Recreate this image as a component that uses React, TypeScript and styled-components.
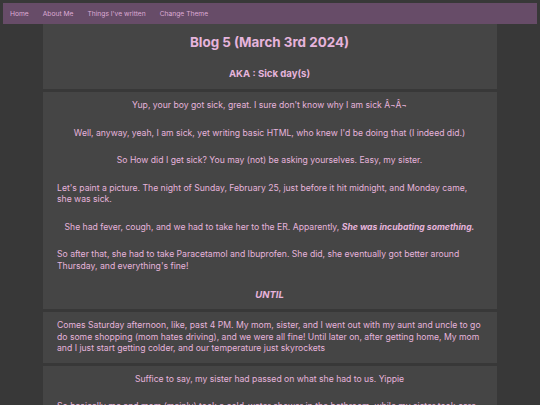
import { createGlobalStyle, styled } from 'styled-components';

const GlobalStyle = createGlobalStyle`
  html, body {
    margin: 0;
    padding: 0;
    background-color: #383838;
  }
  body {
    padding: 3px;
    font-family: Inter, "Noto Sans", sans-serif;
    color: #e6b4dc;
  }
`;

const navItems = ['Home', 'About Me', "Things I've written", 'Change Theme'];

const App = () => {
  return (
    <>
      <GlobalStyle />
      <NavBar>
        {navItems.map((item) => (
          <NavLink key={item}>{item}</NavLink>
        ))}
      </NavBar>
      <Column>
        <Card $header>
          <Title>Blog 5 (March 3rd 2024)</Title>
          <Subtitle>AKA : Sick day(s)</Subtitle>
        </Card>
        <Card>
          <Paragraph $center>Yup, your boy got sick, great. I sure don't know why I am sick Â¬Â¬</Paragraph>
          <Paragraph $center>
            Well, anyway, yeah, I am sick, yet writing basic HTML, who knew I'd be doing that (I indeed did.)
          </Paragraph>
          <Paragraph $center>So How did I get sick? You may (not) be asking yourselves. Easy, my sister.</Paragraph>
          <Paragraph>
            Let's paint a picture. The night of Sunday, February 25, just before it hit midnight, and Monday came,
            she was sick.
          </Paragraph>
          <Paragraph $center>
            She had fever, cough, and we had to take her to the ER. Apparently,{' '}
            <Emphasis>She was incubating something.</Emphasis>
          </Paragraph>
          <Paragraph>
            So after that, she had to take Paracetamol and Ibuprofen. She did, she eventually got better around
            Thursday, and everything's fine!
          </Paragraph>
          <SectionHeading>UNTIL</SectionHeading>
        </Card>
        <Card>
          <Paragraph>
            Comes Saturday afternoon, like, past 4 PM. My mom, sister, and I went out with my aunt and uncle to go
            do some shopping (mom hates driving), and we were all fine! Until later on, after getting home, My mom
            and I just start getting colder, and our temperature just skyrockets
          </Paragraph>
        </Card>
        <Card>
          <Paragraph $center>Suffice to say, my sister had passed on what she had to us. Yippie</Paragraph>
          <Paragraph>
            So basically me and mom (mainly) took a cold-water shower in the bathroom, while my sister took care of
            us and stayed close.
          </Paragraph>
        </Card>
      </Column>
    </>
  );
};

const NavBar = styled.nav`
  display: flex;
  align-items: center;
  height: 21px;
  padding: 0 0 0 7px;
  gap: 14px;
  background-color: #674c68;
  box-sizing: border-box;
`;

const NavLink = styled.a`
  font-size: 6.7px;
  color: #dcaad4;
  cursor: pointer;
`;

const Column = styled.main`
  width: 454px;
  margin: 0 auto;
  display: flex;
  flex-direction: column;
  gap: 3px;
`;

const Card = styled.section<{ $header?: boolean }>`
  background-color: #454545;
  padding: 8px 15px 8px 14px;
  display: flex;
  flex-direction: column;
  gap: ${({ $header }) => ($header ? '15px' : '16px')};
`;

const Title = styled.h1`
  margin: 0;
  font-size: 13.4px;
  line-height: 20px;
  font-weight: 700;
  text-align: center;
`;

const Subtitle = styled.h2`
  margin: 0;
  font-size: 9.6px;
  line-height: 14px;
  font-weight: 700;
  text-align: center;
`;

const Paragraph = styled.p<{ $center?: boolean }>`
  margin: 0;
  font-size: 8.65px;
  line-height: 11.5px;
  text-align: ${({ $center }) => ($center ? 'center' : 'left')};
`;

const Emphasis = styled.em`
  font-weight: 700;
`;

const SectionHeading = styled.h3`
  margin: 0;
  font-size: 9.5px;
  line-height: 13px;
  font-style: italic;
  font-weight: 700;
  text-align: center;
`;

export default App;
